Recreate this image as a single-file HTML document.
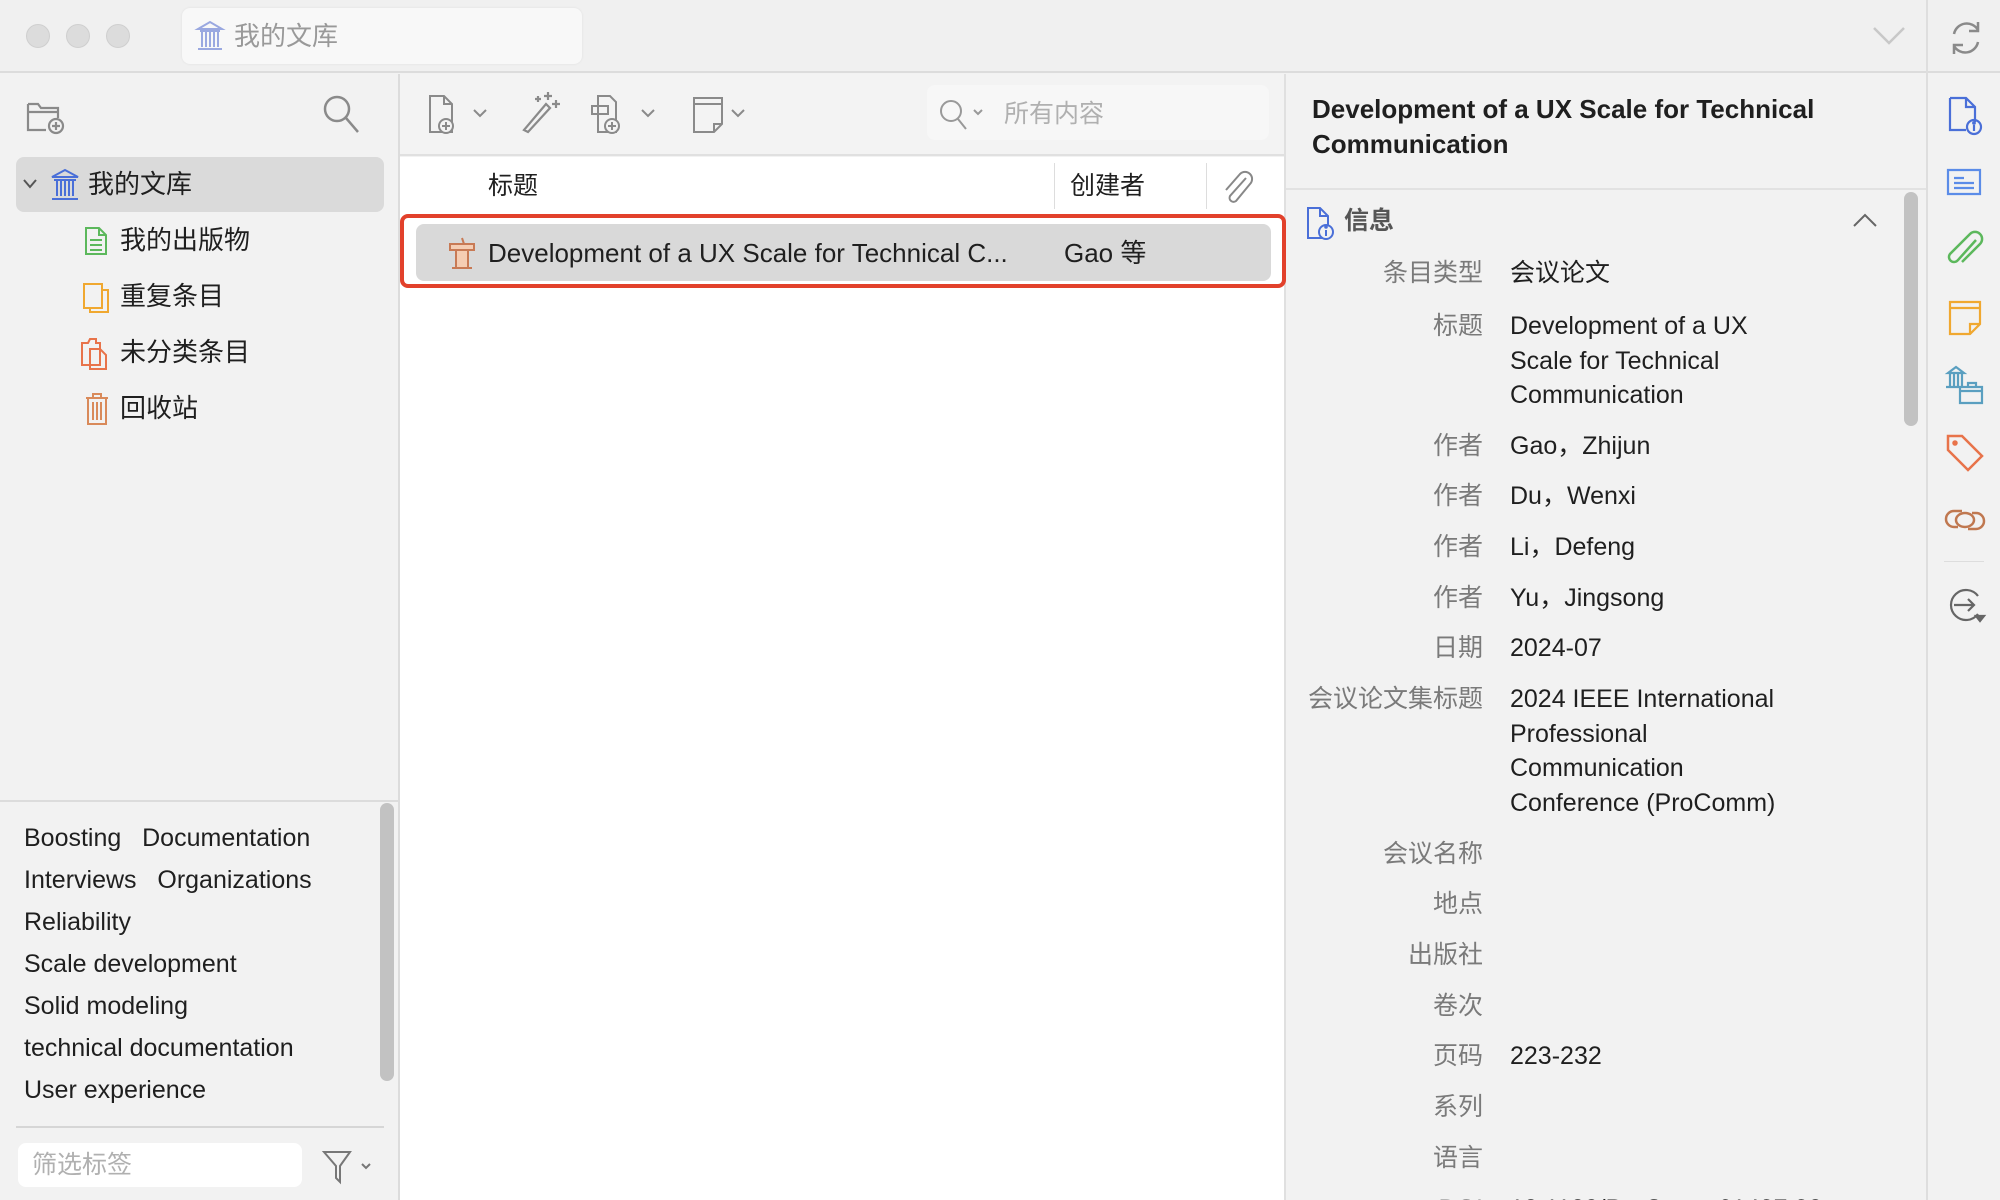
<!DOCTYPE html>
<html style="width:2000px;height:1200px;overflow:hidden"><head><meta charset="utf-8"><style>
*{margin:0;padding:0;box-sizing:border-box}
body{width:2000px;height:1200px;overflow:hidden;background:#f2f2f2;font-family:"Liberation Sans","Noto Sans CJK SC",sans-serif;color:#1f1f1f;position:relative}
.a{position:absolute}
.t{font-size:25px;white-space:nowrap;line-height:30px}
.lbl{position:absolute;right:0;width:220px;text-align:right;color:#7a7a7a;font-size:25px;line-height:30px}
.val{position:absolute;left:230px;width:290px;font-size:25px;line-height:34.5px;color:#1f1f1f}
svg{position:absolute;overflow:visible}
</style></head><body>
<!-- title bar -->
<div class="a" style="left:0;top:0;width:2000px;height:73px;background:#f0f0f0;border-bottom:2px solid #dcdcdc"></div>
<div class="a" style="left:26px;top:24px;width:24px;height:24px;border-radius:50%;background:#dcdcdc;border:1px solid #cfcfcf"></div>
<div class="a" style="left:66px;top:24px;width:24px;height:24px;border-radius:50%;background:#dcdcdc;border:1px solid #cfcfcf"></div>
<div class="a" style="left:106px;top:24px;width:24px;height:24px;border-radius:50%;background:#dcdcdc;border:1px solid #cfcfcf"></div>
<div class="a" style="left:182px;top:8px;width:400px;height:56px;background:#f8f8f8;border-radius:8px;box-shadow:0 0 2px #ddd"></div>
<svg style="left:196px;top:20px" width="28" height="32" viewBox="0 0 28 32" fill="none" stroke="#9aa8e0" stroke-width="2"><path d="M2 9 L14 2 L26 9 Z M4 11h20 M6 12v15 M10 12v15 M14 12v15 M18 12v15 M22 12v15 M2 29h24"/></svg>
<div class="a t" style="left:234px;top:21px;color:#999;font-size:26px">我的文库</div>
<svg style="left:1872px;top:26px" width="34" height="20" fill="none" stroke="#c8c8c8" stroke-width="2.5"><path d="M2 2 L17 17 L32 2"/></svg>
<div class="a" style="left:1926px;top:0;width:2px;height:1200px;background:#dedede"></div>
<svg style="left:1948px;top:18px" width="36" height="40" fill="none" stroke="#8a8a8a" stroke-width="2.5"><path d="M6 16 A13 13 0 0 1 30 12 M30 4v9h-9 M30 24 A13 13 0 0 1 6 28 M6 36v-9h9"/></svg>

<!-- left sidebar -->
<div class="a" style="left:398px;top:74px;width:2px;height:1126px;background:#dcdcdc"></div>
<svg style="left:26px;top:96px" width="40" height="40" fill="none" stroke="#8a8a8a" stroke-width="2.2"><path d="M2 8h10l3 4h17v10 M2 8v26h18 M2 16h30"/><circle cx="30" cy="30" r="7"/><path d="M30 26v8M26 30h8"/></svg>
<svg style="left:322px;top:94px" width="40" height="40" fill="none" stroke="#8a8a8a" stroke-width="2.5"><circle cx="15" cy="15" r="12"/><path d="M24 24l12 14"/></svg>
<div class="a" style="left:16px;top:157px;width:368px;height:55px;background:#dadada;border-radius:8px"></div>
<svg style="left:22px;top:178px" width="16" height="12" fill="none" stroke="#555" stroke-width="2"><path d="M2 2l6 7 6-7"/></svg>
<svg style="left:50px;top:168px" width="30" height="34" fill="none" stroke="#4a6fd8" stroke-width="2"><path d="M2 9 L15 2 L28 9 Z M4 12h22 M7 13v15 M11 13v15 M15 13v15 M19 13v15 M23 13v15 M2 31h26"/></svg>
<div class="a t" style="left:88px;top:169px;font-size:26px">我的文库</div>
<svg style="left:84px;top:226px" width="24" height="30" fill="none" stroke="#5cb85c" stroke-width="2"><path d="M2 2h13l7 7v19H2Z M15 2v7h7 M6 14h12 M6 19h12 M6 24h12"/></svg>
<div class="a t" style="left:120px;top:225px;font-size:26px">我的出版物</div>
<svg style="left:82px;top:282px" width="28" height="32" fill="none" stroke="#f0a830" stroke-width="2"><path d="M2 2h18v24H2Z M8 26v4h18V8h-6"/></svg>
<div class="a t" style="left:120px;top:281px;font-size:26px">重复条目</div>
<svg style="left:80px;top:337px" width="32" height="34" fill="none" stroke="#e8734a" stroke-width="2"><path d="M2 6h6l2-4h6v4h4v22H2Z M10 12h10l6 6v14H10Z"/></svg>
<div class="a t" style="left:120px;top:337px;font-size:26px">未分类条目</div>
<svg style="left:84px;top:392px" width="26" height="34" fill="none" stroke="#d98a5a" stroke-width="2"><path d="M2 6h22 M9 6V2h8v4 M4 6v26h18V6 M9 10v18 M13 10v18 M17 10v18"/></svg>
<div class="a t" style="left:120px;top:393px;font-size:26px">回收站</div>

<div class="a" style="left:0;top:800px;width:398px;height:2px;background:#dcdcdc"></div>
<div class="a" style="left:380px;top:803px;width:14px;height:278px;background:#c2c2c2;border-radius:7px"></div>
<div class="a t" style="left:24px;top:823px;font-size:25px">Boosting&nbsp;&nbsp;&nbsp;Documentation</div>
<div class="a t" style="left:24px;top:865px;font-size:25px">Interviews&nbsp;&nbsp;&nbsp;Organizations</div>
<div class="a t" style="left:24px;top:907px;font-size:25px">Reliability</div>
<div class="a t" style="left:24px;top:949px;font-size:25px">Scale development</div>
<div class="a t" style="left:24px;top:991px;font-size:25px">Solid modeling</div>
<div class="a t" style="left:24px;top:1033px;font-size:25px">technical documentation</div>
<div class="a t" style="left:24px;top:1075px;font-size:25px">User experience</div>
<div class="a" style="left:16px;top:1126px;width:368px;height:2px;background:#d6d6d6"></div>
<div class="a" style="left:18px;top:1143px;width:284px;height:44px;background:#fff;border-radius:8px"></div>
<div class="a t" style="left:32px;top:1150px;color:#b0b0b0">筛选标签</div>
<svg style="left:322px;top:1150px" width="50" height="34" fill="none" stroke="#777" stroke-width="2"><path d="M2 2h26L18 16v16l-4-4V16Z M40 14l4 4 4-4"/></svg>

<!-- middle -->
<div class="a" style="left:400px;top:74px;width:884px;height:82px;background:#f3f3f3;border-bottom:2px solid #e0e0e0"></div>
<div class="a" style="left:400px;top:157px;width:884px;height:1043px;background:#fff"></div>
<div class="a" style="left:1284px;top:74px;width:2px;height:1126px;background:#e0e0e0"></div>
<svg style="left:428px;top:94px" width="64" height="44" fill="none" stroke="#8a8a8a" stroke-width="2"><path d="M2 2h14l8 8v28H2Z M16 2v8h8"/><circle cx="18" cy="32" r="7" fill="#f3f3f3"/><path d="M18 28v8M14 32h8 M46 16l6 6 6-6"/></svg>
<svg style="left:520px;top:90px" width="42" height="44" fill="none" stroke="#8a8a8a" stroke-width="2.2"><path d="M4 40L26 14l4 4L8 42Z M28 2v8M24 6h8 M36 10v8M32 14h8 M18 6v6M15 9h6"/></svg>
<svg style="left:590px;top:94px" width="66" height="44" fill="none" stroke="#8a8a8a" stroke-width="2"><path d="M8 2h12l6 6v30H8Z M2 12h16v8H2Z"/><circle cx="22" cy="32" r="7" fill="#f3f3f3"/><path d="M22 28v8M18 32h8 M52 16l6 6 6-6"/></svg>
<svg style="left:692px;top:96px" width="60" height="40" fill="none" stroke="#8a8a8a" stroke-width="2"><path d="M2 2h28v26l-8 8H2Z M2 8h28 M22 36v-8h8 M40 14l6 6 6-6"/></svg>
<div class="a" style="left:927px;top:85px;width:342px;height:55px;background:#f7f7f7;border-radius:8px"></div>
<svg style="left:938px;top:98px" width="52" height="34" fill="none" stroke="#999" stroke-width="2"><circle cx="13" cy="13" r="10"/><path d="M20 21l8 10 M36 12l4 4 4-4"/></svg>
<div class="a t" style="left:1004px;top:99px;color:#b0b0b0">所有内容</div>
<div class="a t" style="left:488px;top:171px">标题</div>
<div class="a" style="left:1054px;top:163px;width:1px;height:46px;background:#ddd"></div>
<div class="a t" style="left:1070px;top:171px">创建者</div>
<div class="a" style="left:1206px;top:163px;width:1px;height:46px;background:#ddd"></div>
<svg style="left:1222px;top:172px" width="30" height="34" fill="none" stroke="#888" stroke-width="2"><path d="M24 6L8 24a4 4 0 0 0 6 5L28 12a7 7 0 0 0-10-10L4 18"/></svg>
<div class="a" style="left:400px;top:214px;width:886px;height:74px;border:4px solid #e2412b;border-radius:8px"></div>
<div class="a" style="left:416px;top:224px;width:855px;height:57px;background:#d9d9d9;border-radius:8px"></div>
<svg style="left:448px;top:236px" width="28" height="34" fill="#f5cdb3" stroke="#c87a55" stroke-width="2"><path d="M2 8h24v6H2Z M8 14h12v18H8Z M4 32h20 M14 2l2 6" fill-rule="evenodd"/></svg>
<div class="a t" style="left:488px;top:238px;font-size:26px">Development of a UX Scale for Technical C...</div>
<div class="a t" style="left:1064px;top:238px;font-size:26px">Gao 等</div>

<!-- right pane -->
<div class="a t" style="left:1312px;top:92px;font-weight:bold;font-size:26px;line-height:35px;white-space:normal;width:560px">Development of a UX Scale for Technical Communication</div>
<div class="a" style="left:1286px;top:188px;width:640px;height:2px;background:#e2e2e2"></div>
<div class="a" style="left:1904px;top:192px;width:14px;height:234px;background:#c2c2c2;border-radius:7px"></div>
<svg style="left:1306px;top:206px" width="30" height="34" fill="none" stroke="#4a6fd8" stroke-width="2"><path d="M2 2h12l8 8v22H2Z M14 2v8h8"/><circle cx="20" cy="26" r="7" fill="#f2f2f2"/><path d="M20 24v6"/><circle cx="20" cy="21" r="0.8" fill="#4a6fd8"/></svg>
<div class="a t" style="left:1344px;top:206px;color:#555;font-weight:bold">信息</div>
<svg style="left:1852px;top:212px" width="26" height="16" fill="none" stroke="#666" stroke-width="2"><path d="M2 14L13 3l11 11"/></svg>

<div class="a" style="left:1263px;top:0;width:640px;height:1200px;overflow:hidden">
<div class="lbl" style="top:258px;right:420px">条目类型</div><div class="val" style="top:256px;left:247px">会议论文</div>
<div class="lbl" style="top:311px;right:420px">标题</div><div class="val" style="top:309px;left:247px">Development of a UX Scale for Technical Communication</div>
<div class="lbl" style="top:431px;right:420px">作者</div><div class="val" style="top:429px;left:247px">Gao，Zhijun</div>
<div class="lbl" style="top:481px;right:420px">作者</div><div class="val" style="top:479px;left:247px">Du，Wenxi</div>
<div class="lbl" style="top:532px;right:420px">作者</div><div class="val" style="top:530px;left:247px">Li，Defeng</div>
<div class="lbl" style="top:583px;right:420px">作者</div><div class="val" style="top:581px;left:247px">Yu，Jingsong</div>
<div class="lbl" style="top:633px;right:420px">日期</div><div class="val" style="top:631px;left:247px">2024-07</div>
<div class="lbl" style="top:684px;right:420px">会议论文集标题</div><div class="val" style="top:682px;left:247px;width:290px">2024 IEEE International<br>Professional<br>Communication<br>Conference (ProComm)</div>
<div class="lbl" style="top:839px;right:420px">会议名称</div>
<div class="lbl" style="top:889px;right:420px">地点</div>
<div class="lbl" style="top:940px;right:420px">出版社</div>
<div class="lbl" style="top:991px;right:420px">卷次</div>
<div class="lbl" style="top:1041px;right:420px">页码</div><div class="val" style="top:1039px;left:247px">223-232</div>
<div class="lbl" style="top:1092px;right:420px">系列</div>
<div class="lbl" style="top:1143px;right:420px">语言</div>
<div class="lbl" style="top:1194px;right:420px">DOI</div><div class="val" style="top:1192px;left:247px;white-space:nowrap">10.1109/ProComm61427.20</div>
</div>

<!-- right sidebar icons -->
<svg style="left:1948px;top:96px" width="34" height="40" fill="none" stroke="#4a6fd8" stroke-width="2.2"><path d="M2 2h16l9 9v15 M2 2v32h16 M18 2v9h9"/><circle cx="26" cy="31" r="7"/><path d="M26 29v6"/><circle cx="26" cy="27" r="0.8" fill="#4a6fd8"/></svg>
<svg style="left:1946px;top:168px" width="36" height="28" fill="none" stroke="#5b8ce8" stroke-width="2.2"><path d="M2 2h32v24H2Z M8 10h10 M8 15h20 M8 20h20"/></svg>
<svg style="left:1946px;top:230px" width="38" height="38" fill="none" stroke="#5cb85c" stroke-width="2.5"><path d="M30 10L12 30a5 5 0 0 1-8-6L24 4a7 7 0 0 1 10 10L16 32"/></svg>
<svg style="left:1948px;top:300px" width="34" height="36" fill="none" stroke="#f0a830" stroke-width="2.2"><path d="M2 2h30v22l-10 10H2Z M2 8h30 M22 34V24h10"/></svg>
<svg style="left:1944px;top:365px" width="40" height="40" fill="none" stroke="#5a9fc0" stroke-width="2.2"><path d="M4 8L12 2l8 6Z M6 9v12 M10 9v12 M14 9v12 M18 9v12 M2 22h18 M16 22h22v16H16Z M16 26h22 M24 22v-4h8v4"/></svg>
<svg style="left:1946px;top:434px" width="38" height="38" fill="none" stroke="#e8734a" stroke-width="2.5"><path d="M2 2h14l20 20-14 14L2 16Z"/><circle cx="9" cy="9" r="1.5" fill="#e8734a"/></svg>
<svg style="left:1944px;top:505px" width="42" height="30" fill="none" stroke="#c07850" stroke-width="2.5"><path d="M18 6H10a8 8 0 0 0 0 16h4 M24 24h8a8 8 0 0 0 0-16h-4"/><ellipse cx="21" cy="15" rx="9" ry="7"/></svg>
<div class="a" style="left:1944px;top:561px;width:40px;height:1px;background:#ddd"></div>
<svg style="left:1944px;top:586px" width="42" height="38" fill="none" stroke="#666" stroke-width="2.2"><path d="M34 10A15 15 0 1 0 34 28 M10 19h20 M24 13l6 6-6 6"/><path d="M32 30h8l-4 5Z" fill="#666"/></svg>
</body></html>
